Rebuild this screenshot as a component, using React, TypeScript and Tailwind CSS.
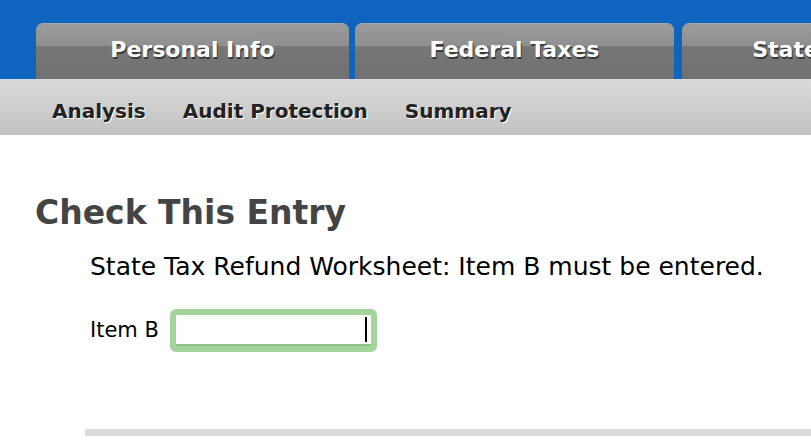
const tabs = [
  { label: "Personal Info", width: "w-[313px]" },
  { label: "Federal Taxes", width: "w-[319px]" },
  { label: "State Taxes", width: "w-[284px] ml-[2px]" },
];

const subnav = ["Analysis", "Audit Protection", "Summary"];

function Tab({ label, width }: { label: string; width: string }) {
  return (
    <div
      className={`${width} shrink-0 h-[56px] rounded-t-[7px] overflow-hidden flex flex-col relative border-t border-[#a8a8a8]`}
    >
      <div className="h-[22px] bg-gradient-to-b from-[#9c9c9c] to-[#8f8f8f]" />
      <div className="flex-1 bg-gradient-to-b from-[#777] to-[#717171]" />
      <span className="absolute inset-0 flex items-center justify-center pb-[4px] text-white font-bold text-[22px] whitespace-nowrap [text-shadow:1px_2px_0_#3a3a3a]">
        {label}
      </span>
    </div>
  );
}

export default function App() {
  return (
    <div className="w-[811px] h-[444px] overflow-hidden bg-white font-['DejaVu_Sans',sans-serif]">
      {/* top tabs */}
      <div className="h-[79px] bg-[#0e64be] flex items-end gap-[6px] pl-[36px] overflow-hidden">
        {tabs.map((t) => (
          <Tab key={t.label} label={t.label} width={t.width} />
        ))}
      </div>

      {/* sub navigation */}
      <div className="h-[56px] bg-gradient-to-b from-[#dadada] to-[#c2c2c2] flex items-center pl-[52px] gap-[37px] pt-[8px]">
        {subnav.map((s) => (
          <span
            key={s}
            className="font-bold text-[20px] text-[#222] [text-shadow:1px_1px_0_#fff]"
          >
            {s}
          </span>
        ))}
      </div>

      {/* content */}
      <div className="pt-[58px]">
        <h1 className="pl-[35px] text-[33px] font-bold text-[#444] leading-[40px]">
          Check This Entry
        </h1>
        <p className="pl-[90px] mt-[19px] text-[25px] text-black leading-[30px] whitespace-nowrap">
          State Tax Refund Worksheet: Item B must be entered.
        </p>
        <div className="pl-[90px] mt-[27px] flex items-center gap-[11px]">
          <label className="text-[21px] text-black">Item B</label>
          <div className="w-[207px] h-[43px] rounded-[6px] bg-[#a3d49b] p-[6px]">
            <div className="h-full bg-white border-b-2 border-[#8cc484] flex items-center justify-end pr-[4px]">
              <div className="w-[2px] h-[25px] bg-black" />
            </div>
          </div>
        </div>
        <div className="ml-[85px] mt-[77px] h-[7px] bg-[#dcdcdc]" />
      </div>
    </div>
  );
}
